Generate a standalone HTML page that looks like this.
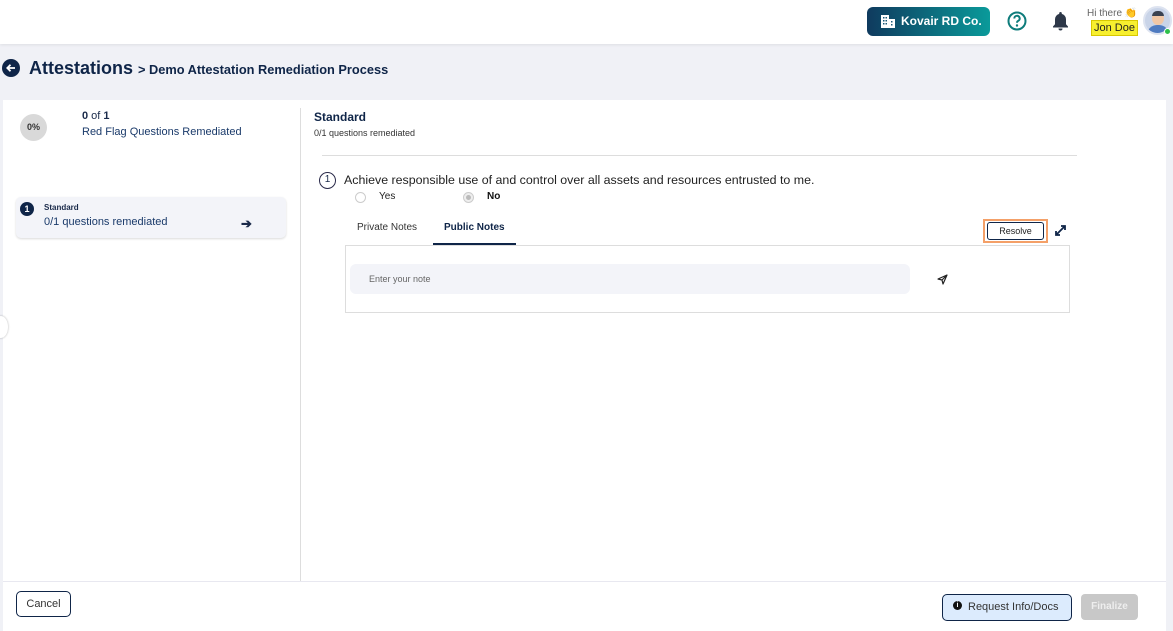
<!DOCTYPE html>
<html><head><meta charset="utf-8">
<style>
*{box-sizing:border-box;margin:0;padding:0}
body{width:1173px;height:631px;overflow:hidden;background:#f0f1f6;font-family:"Liberation Sans",sans-serif;color:#1a2a4a;position:relative}
.abs{position:absolute}
</style></head><body>
<div class="abs" style="left:0;top:0;width:1173px;height:44px;background:#fff;box-shadow:0 1px 3px rgba(0,0,0,.08)"></div>
<div class="abs" style="left:867px;top:7px;width:123px;height:29px;border-radius:6px;background:linear-gradient(90deg,#0f3a5e,#0a9a9a);color:#fff;font-weight:bold;font-size:12px;line-height:29px;padding-left:34px">Kovair RD Co.</div>
<svg class="abs" style="left:881px;top:15px" width="14" height="13" viewBox="0 0 14 13"><rect x="0" y="0" width="8" height="13" fill="#fff"/><rect x="8" y="4" width="6" height="9" fill="#fff"/><g fill="#1b5a78"><rect x="2" y="2" width="1.5" height="1.5"/><rect x="4.5" y="2" width="1.5" height="1.5"/><rect x="2" y="5" width="1.5" height="1.5"/><rect x="4.5" y="5" width="1.5" height="1.5"/><rect x="2" y="8" width="1.5" height="1.5"/><rect x="4.5" y="8" width="1.5" height="1.5"/><rect x="10" y="6" width="1.5" height="1.5"/><rect x="10" y="9" width="1.5" height="1.5"/></g></svg>
<svg class="abs" style="left:1007px;top:11px" width="20" height="20" viewBox="0 0 20 20"><circle cx="10" cy="10" r="8.5" fill="none" stroke="#0e7c7b" stroke-width="2"/><path d="M7.3 7.5a2.7 2.7 0 1 1 3.7 2.5c-.8.4-1 .8-1 1.7" fill="none" stroke="#0e7c7b" stroke-width="2"/><circle cx="10" cy="14.5" r="1.2" fill="#0e7c7b"/></svg>
<svg class="abs" style="left:1052px;top:11px" width="17" height="20" viewBox="0 0 17 20"><path d="M8.5 1a1.3 1.3 0 0 1 1.3 1.3v.6A5.5 5.5 0 0 1 14 8.3v5l2 2.2v1H1v-1l2-2.2v-5a5.5 5.5 0 0 1 4.2-5.4v-.6A1.3 1.3 0 0 1 8.5 1z" fill="#2d3748"/><path d="M6.5 17.5h4a2 2 0 0 1-4 0z" fill="#2d3748"/></svg>
<div class="abs" style="left:1087px;top:8px;font-size:10px;color:#666">Hi there 👏</div>
<div class="abs" style="left:1091px;top:20px;width:47px;height:16px;background:#f7ef2e;border:1px solid #d8c800;font-size:11px;line-height:14px;text-align:center;color:#222">Jon Doe</div>
<div class="abs" style="left:1143px;top:6px;width:29px;height:29px;border-radius:50%;background:#c9d4e8;border:2px solid #dde3f0;overflow:hidden">
<div class="abs" style="left:7px;top:4px;width:12px;height:13px;border-radius:50%;background:#f1c7a5"></div>
<div class="abs" style="left:7px;top:3px;width:12px;height:5px;border-radius:6px 6px 0 0;background:#3b4250"></div>
<div class="abs" style="left:2px;top:17px;width:22px;height:12px;border-radius:10px 10px 0 0;background:#4f7bc0"></div></div>
<div class="abs" style="left:1164px;top:28px;width:7px;height:7px;border-radius:50%;background:#2ec04a;border:1px solid #fff"></div>

<svg class="abs" style="left:2px;top:59px" width="18" height="18" viewBox="0 0 18 18"><circle cx="9" cy="9" r="9" fill="#0f2548"/><path d="M13 9H5.5M8.5 5.8L5.3 9l3.2 3.2" stroke="#fff" stroke-width="1.8" fill="none"/></svg>
<div class="abs" style="left:29px;top:58px;font-size:18px;font-weight:bold;color:#0f2548">Attestations</div>
<div class="abs" style="left:138px;top:62px;font-size:12.8px;font-weight:bold;color:#0f2548">&gt; Demo Attestation Remediation Process</div>

<div class="abs" style="left:3px;top:100px;width:1163px;height:531px;background:#fff"></div>
<div class="abs" style="left:1166px;top:100px;width:7px;height:531px;background:#f0f1f6"></div>
<div class="abs" style="left:-6px;top:316px;width:14px;height:22px;border-radius:50%;background:#fff;box-shadow:0 0 2px rgba(0,0,0,.3)"></div>

<div class="abs" style="left:20px;top:114px;width:27px;height:27px;border-radius:50%;background:#d9d9d9;font-size:9px;font-weight:bold;line-height:27px;text-align:center;color:#333">0%</div>
<div class="abs" style="left:82px;top:110px;font-size:11px"><b>0</b> of <b>1</b></div>
<div class="abs" style="left:82px;top:126px;font-size:11px;color:#1a3a6a">Red Flag Questions Remediated</div>

<div class="abs" style="left:16px;top:197px;width:270px;height:41px;background:#f3f4f9;border-radius:5px;box-shadow:0 1px 2px rgba(0,0,0,.15)"></div>
<div class="abs" style="left:20px;top:202px;width:14px;height:14px;border-radius:50%;background:#0f2548;color:#fff;font-size:9px;font-weight:bold;line-height:14px;text-align:center">1</div>
<div class="abs" style="left:44px;top:203px;font-size:8px;font-weight:bold">Standard</div>
<div class="abs" style="left:44px;top:216px;font-size:11px;color:#1a3a6a">0/1 questions remediated</div>
<div class="abs" style="left:241px;top:216px;font-size:13px;font-weight:bold">➔</div>

<div class="abs" style="left:300px;top:108px;width:1px;height:473px;background:#ddd"></div>
<div class="abs" style="left:314px;top:110px;font-size:12px;font-weight:bold;color:#0f2548">Standard</div>
<div class="abs" style="left:314px;top:128px;font-size:9px;color:#333">0/1 questions remediated</div>
<div class="abs" style="left:322px;top:155px;width:755px;height:1px;background:#ddd"></div>

<div class="abs" style="left:319px;top:172px;width:17px;height:17px;border-radius:50%;border:1.5px solid #2a2a4a;font-size:10px;line-height:14px;text-align:center">1</div>
<div class="abs" style="left:344px;top:173px;font-size:12.4px;color:#222">Achieve responsible use of and control over all assets and resources entrusted to me.</div>
<div class="abs" style="left:355px;top:192px;width:11px;height:11px;border-radius:50%;border:1px solid #ccc"></div>
<div class="abs" style="left:379px;top:191px;font-size:10px;color:#222">Yes</div>
<div class="abs" style="left:463px;top:192px;width:11px;height:11px;border-radius:50%;border:1px solid #ccc;background:#eee"><div style="margin:2px;width:5px;height:5px;border-radius:50%;background:#bbb"></div></div>
<div class="abs" style="left:487px;top:191px;font-size:10px;font-weight:bold;color:#111">No</div>

<div class="abs" style="left:357px;top:222px;font-size:10px;color:#333">Private Notes</div>
<div class="abs" style="left:444px;top:222px;font-size:10px;font-weight:bold;color:#0f2548">Public Notes</div>
<div class="abs" style="left:433px;top:243px;width:83px;height:2px;background:#0f2548"></div>
<div class="abs" style="left:983px;top:219px;width:65px;height:24px;border:2px solid #f4a068"></div>
<div class="abs" style="left:987px;top:222px;width:57px;height:18px;border:1px solid #0f2548;border-radius:3px;font-size:9px;line-height:16px;text-align:center;color:#222">Resolve</div>
<svg class="abs" style="left:1054px;top:224px" width="13" height="13" viewBox="0 0 13 13"><path d="M2 11L11 2M7 2h4v4M2 7v4h4" stroke="#0f2548" stroke-width="1.8" fill="none"/></svg>
<div class="abs" style="left:345px;top:245px;width:725px;height:68px;border:1px solid #ddd"></div>
<div class="abs" style="left:350px;top:264px;width:560px;height:30px;background:#f3f4f9;border-radius:6px;font-size:9px;color:#666;line-height:31px;padding-left:19px">Enter your note</div>
<svg class="abs" style="left:937px;top:274px" width="11" height="11" viewBox="0 0 11 11"><path d="M10 1L1 5l4 1 1 4z M10 1L5 6" stroke="#222" stroke-width="1.2" fill="none" stroke-linejoin="round"/></svg>

<div class="abs" style="left:3px;top:581px;width:1163px;height:1px;background:#e8e8f0"></div>
<div class="abs" style="left:16px;top:591px;width:55px;height:26px;border:1px solid #0f2548;border-radius:5px;font-size:11px;line-height:24px;text-align:center;color:#333">Cancel</div>
<div class="abs" style="left:942px;top:594px;width:130px;height:27px;border:1px solid #0f2548;border-radius:5px;background:#dcebfd;font-size:11px;line-height:25px;color:#333;padding-left:25px">Request Info/Docs</div>
<div class="abs" style="left:953px;top:601px;width:9px;height:9px;border-radius:50%;background:#111;color:#fff;font-size:7px;font-weight:bold;line-height:9px;text-align:center">i</div>
<div class="abs" style="left:1081px;top:594px;width:57px;height:26px;border-radius:4px;background:#c8c8c8;color:#eee;font-size:10px;font-weight:bold;line-height:26px;text-align:center">Finalize</div>
</body></html>
